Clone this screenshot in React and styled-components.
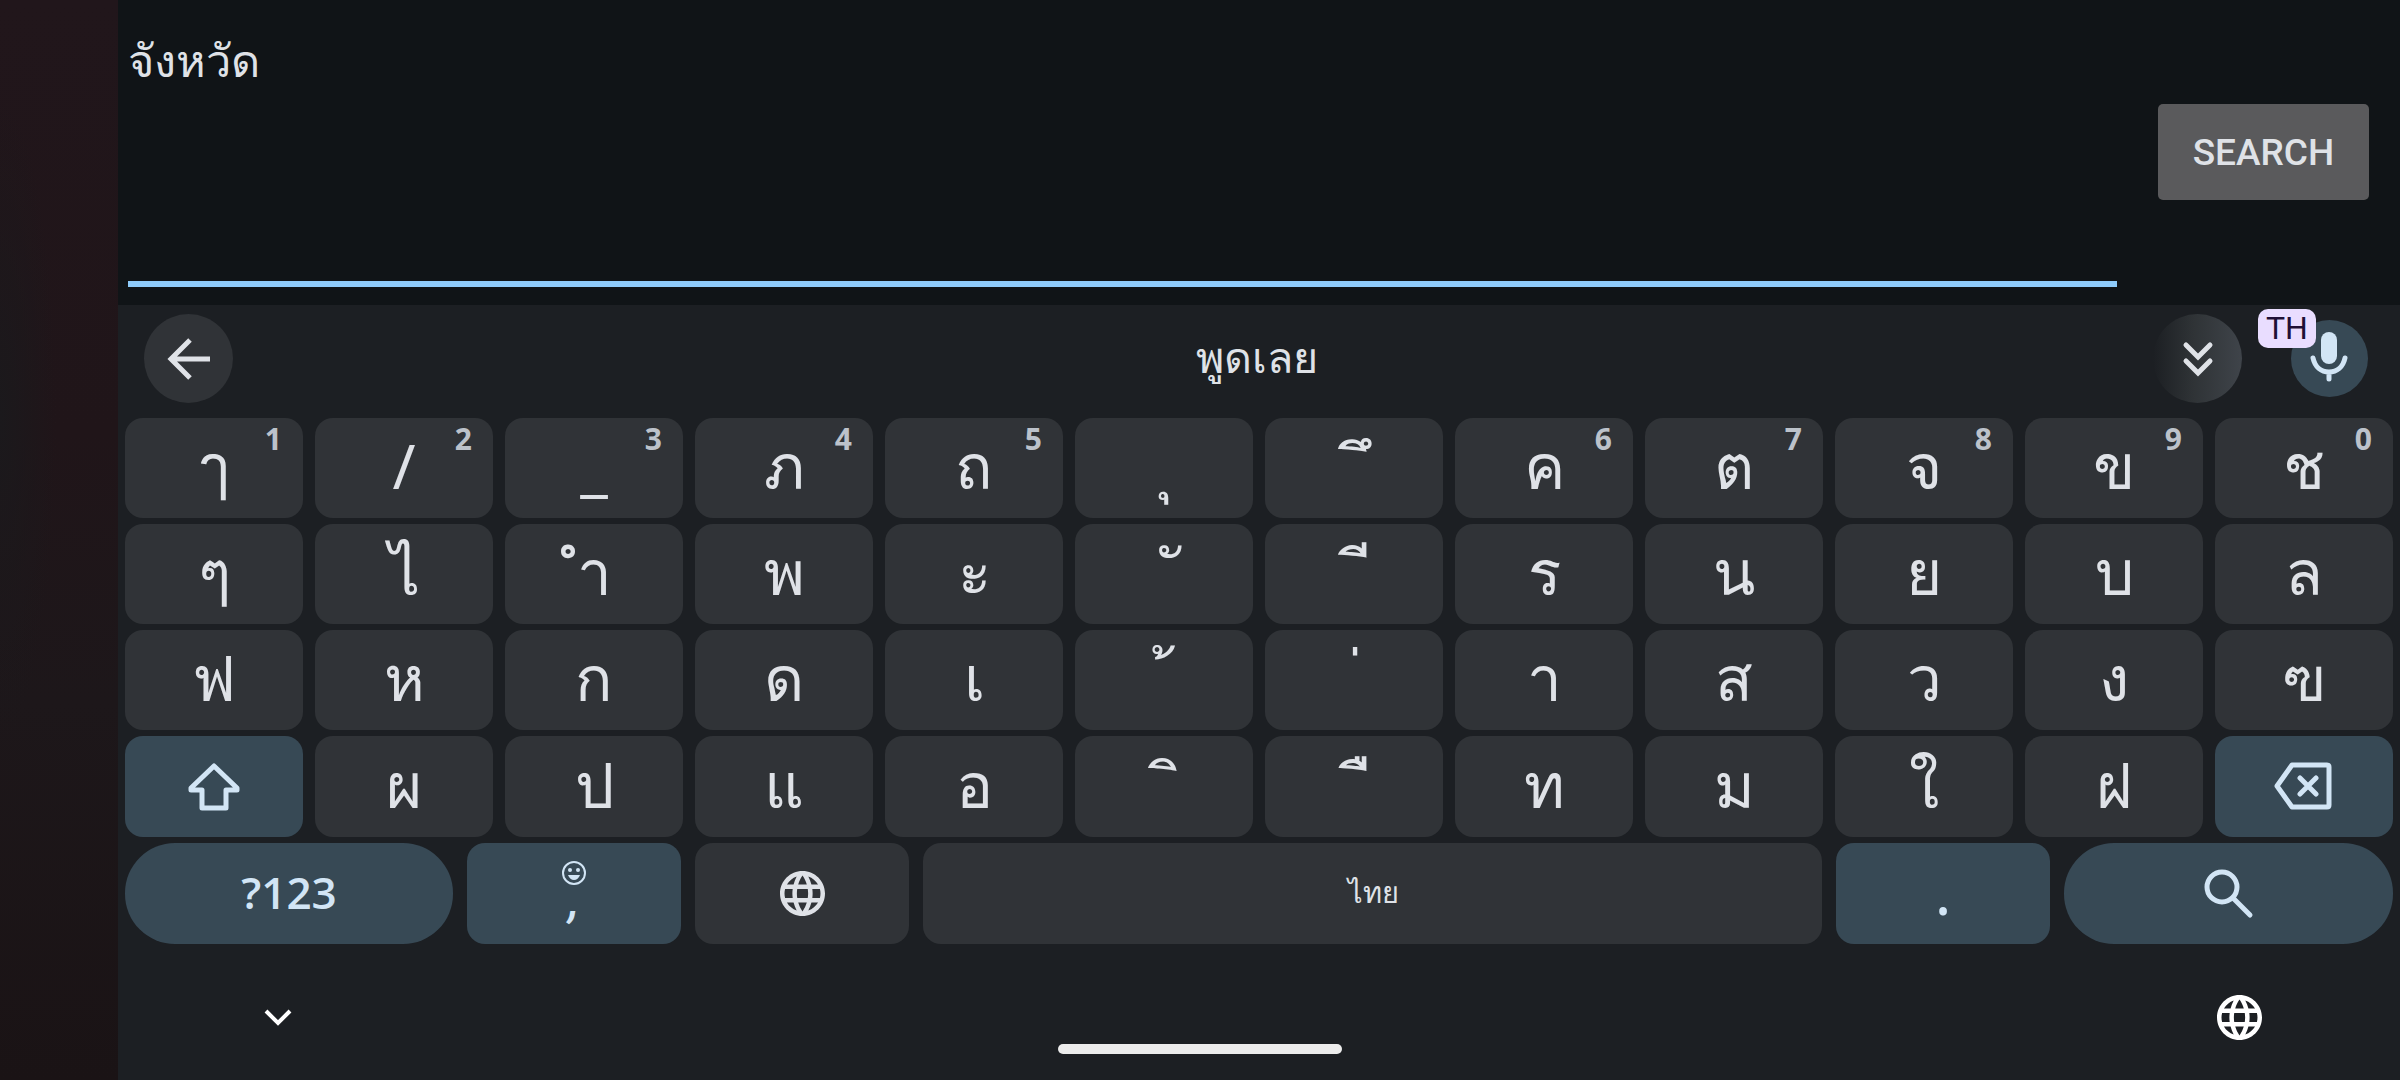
import React from 'react';
import styled, { createGlobalStyle } from 'styled-components';

const latin = `Roboto, "Noto Sans", "Liberation Sans", sans-serif`;
const digits = `"Open Sans", "Noto Sans", sans-serif`;
const thai = `"Noto Sans", "Liberation Sans", sans-serif`;

const color = {
  app: '#101417',
  board: '#1c1f23',
  key: '#303337',
  action: '#374955',
  ink: '#dfe2e7',
  accentInk: '#d2e5f5',
  line: '#8ecbfa',
};

const GlobalStyle = createGlobalStyle`
  * { box-sizing: border-box; }
  body { margin: 0; background: ${color.app}; }
  button { border: 0; padding: 0; font: inherit; color: inherit; cursor: pointer; }
  svg { display: block; }
`;

const Screen = styled.div`
  position: relative;
  display: grid;
  grid-template-columns: 118px minmax(0, 1fr);
  min-height: 100vh;
  font-family: ${latin};
  color: ${color.ink};
`;

const Wallpaper = styled.aside`
  background:
    radial-gradient(ellipse 56px 320px at 0 420px, #1b191c 0%, rgba(27, 25, 28, 0) 100%),
    linear-gradient(180deg, #21161b 0%, #201519 40%, #1d171a 65%, #1a1315 100%);
`;

const Main = styled.main`
  display: flex;
  flex-direction: column;
  background: ${color.board};
`;

const Compose = styled.form`
  display: flex;
  align-items: flex-start;
  gap: 41px;
  height: 305px;
  padding: 0 31px 18px 10px;
  background: ${color.app};
`;

const Field = styled.textarea`
  flex: 1;
  align-self: stretch;
  min-width: 0;
  padding: 30px 0 0;
  border: 0;
  border-bottom: 6px solid ${color.line};
  border-radius: 0;
  outline: 0;
  resize: none;
  background: transparent;
  color: ${color.ink};
  font: 400 45px/60px ${thai};
`;

const SearchButton = styled.button`
  width: 211px;
  height: 96px;
  margin-top: 104px;
  padding-top: 2px;
  border-radius: 5px;
  background: #5a5a5c;
  color: ${color.ink};
  font: 500 37px/44px ${latin};
`;

const Toolbar = styled.header`
  display: grid;
  grid-template-columns: 1fr auto 1fr;
  align-items: center;
  height: 107px;
  padding: 0 32px 0 26px;
`;

const Tools = styled.div`
  display: flex;
  align-items: center;
  justify-content: flex-end;
  gap: 49px;
`;

const RoundButton = styled.button`
  position: relative;
  display: grid;
  place-items: center;
  width: ${(p) => p.$size}px;
  height: ${(p) => p.$size}px;
  border-radius: 50%;
  background: ${(p) => p.$fill};
`;

const VoiceButton = styled(RoundButton)`
  color: ${color.accentInk};
`;

const Prompt = styled.p`
  margin: 0;
  padding: 0 0 4px 2px;
  font: 400 43px/60px ${thai};
`;

const Badge = styled.span`
  position: absolute;
  top: -11px;
  left: -33px;
  padding: 0 8px;
  border-radius: 10px;
  background: #e9ddff;
  color: #1f1036;
  font: 400 32px/39px ${latin};
`;

const Keys = styled.section`
  display: flex;
  flex-direction: column;
  gap: 6px;
  padding: 6px 7px 0;
`;

const KeyRow = styled.div`
  display: grid;
  grid-template-columns: ${(p) => p.$columns || 'repeat(12, minmax(0, 1fr))'};
  grid-auto-rows: ${(p) => (p.$tall ? 101 : 100)}px;
  gap: ${(p) => (p.$columns ? 14 : 12)}px;
`;

const Key = styled.button`
  position: relative;
  display: flex;
  flex-direction: column;
  align-items: center;
  justify-content: center;
  border-radius: ${(p) => (p.$pill ? 50 : 18)}px;
  background: ${(p) => (p.$action ? color.action : color.key)};
  color: ${(p) => (p.$action ? color.accentInk : color.ink)};
`;

const letterPadding = {
  base: '0 0 6px',
  vowel: '0 0 6px 18px',
  tone: '14px 0 0',
};

const Letter = styled.span`
  padding: ${(p) => letterPadding[p.$kind || 'base']};
  font: 400 62px/80px ${thai};
`;

const Hint = styled.span`
  position: absolute;
  top: 5px;
  right: 21px;
  color: #bcc2ca;
  font: 700 30px/32px ${digits};
`;

const SymbolsLabel = styled.span`
  padding-bottom: 4px;
  font: 600 44px/52px ${digits};
`;

const SpaceLabel = styled.span`
  padding: 0 0 4px 2px;
  font: 400 29px/40px ${thai};
`;

const CommaLabel = styled.span`
  margin-bottom: 12px;
  font: italic 500 48px/30px ${latin};
`;

const NavBar = styled.footer`
  display: flex;
  align-items: center;
  justify-content: space-between;
  height: 136px;
  padding: 11px 138px 0 146px;
  color: #fff;
`;

const NavButton = styled.button`
  display: grid;
  place-items: center;
  background: transparent;
`;

const HomeHandle = styled.div`
  position: absolute;
  bottom: 26px;
  left: 50%;
  width: 284px;
  height: 10px;
  margin-left: -142px;
  border-radius: 5px;
  background: #ececec;
`;

const Globe = ({ size }) => (
  <svg width={size} height={size} viewBox="2 2 20 20" fill="currentColor" aria-hidden="true">
    <path d="M11.99 2C6.47 2 2 6.48 2 12s4.47 10 9.99 10C17.52 22 22 17.52 22 12S17.52 2 11.99 2zm6.93 6h-2.95c-.32-1.25-.78-2.45-1.38-3.56 1.84.63 3.37 1.91 4.33 3.56zM12 4.04c.83 1.2 1.48 2.53 1.91 3.96h-3.82c.43-1.43 1.08-2.76 1.91-3.96zM4.26 14C4.1 13.36 4 12.69 4 12s.1-1.36.26-2h3.38c-.08.66-.14 1.32-.14 2s.06 1.34.14 2H4.26zm.82 2h2.95c.32 1.25.78 2.45 1.38 3.56-1.84-.63-3.37-1.9-4.33-3.56zm2.95-8H5.08c.96-1.66 2.49-2.93 4.33-3.56C8.81 5.55 8.35 6.75 8.03 8zM12 19.96c-.83-1.2-1.48-2.53-1.91-3.96h3.82c-.43 1.43-1.08 2.76-1.91 3.96zM14.34 14H9.66c-.09-.66-.16-1.32-.16-2s.07-1.35.16-2h4.68c.09.65.16 1.32.16 2s-.07 1.34-.16 2zm.25 5.56c.6-1.11 1.06-2.31 1.38-3.56h2.95c-.96 1.65-2.49 2.93-4.33 3.56zM16.36 14c.08-.66.14-1.32.14-2s-.06-1.34-.14-2h3.38c.16.64.26 1.31.26 2s-.1 1.36-.26 2h-3.38z" />
  </svg>
);

const BackArrow = () => (
  <svg width="44" height="44" viewBox="0 0 44 44" fill="none" stroke="currentColor" strokeWidth="5" aria-hidden="true">
    <path d="M43 22H5M23 3 4 22l19 19" />
  </svg>
);

const DoubleChevron = () => (
  <svg width="32" height="36" viewBox="0 0 32 36" fill="none" stroke="currentColor" strokeWidth="5" strokeLinecap="round" aria-hidden="true">
    <path d="M4 4l12 12L28 4M4 20l12 12 12-12" />
  </svg>
);

const Mic = () => (
  <svg width="40" height="54" viewBox="0 0 40 54" fill="none" stroke="currentColor" strokeWidth="5" strokeLinecap="round" aria-hidden="true">
    <rect x="11" y="0" width="16" height="32" rx="8" fill="currentColor" stroke="none" />
    <path d="M3 26c2 9 8 14 16 14s14-5 16-14M19 40v7" />
  </svg>
);

const ShiftArrow = () => (
  <svg width="52" height="50" viewBox="0 0 52 50" fill="none" stroke="currentColor" strokeWidth="5" strokeLinejoin="round" aria-hidden="true">
    <path d="M26 4 3 26v2h11v18h24V28h11v-2z" />
  </svg>
);

const Backspace = () => (
  <svg width="60" height="50" viewBox="0 1 60 50" fill="none" stroke="currentColor" strokeWidth="5" strokeLinecap="round" strokeLinejoin="round" aria-hidden="true">
    <path d="M18 4h35q2 0 2 2v38q0 2-2 2H18L3 25zM26 17l16 16M42 17 26 33" />
  </svg>
);

const Magnifier = () => (
  <svg width="52" height="52" viewBox="0 0 52 52" fill="none" stroke="currentColor" strokeWidth="5" strokeLinecap="round" aria-hidden="true">
    <circle cx="19" cy="19" r="15" />
    <path d="M30 30 47 47" />
  </svg>
);

const Smiley = () => (
  <svg width="24" height="24" viewBox="0 0 24 24" aria-hidden="true">
    <circle cx="12" cy="12" r="11" fill="none" stroke="currentColor" strokeWidth="2" />
    <circle cx="8" cy="9" r="2" fill="currentColor" />
    <circle cx="16" cy="9" r="2" fill="currentColor" />
    <path d="M6 14h12q-2 5-6 5t-6-5z" fill="currentColor" />
  </svg>
);

const ChevronDown = () => (
  <svg width="28" height="18" viewBox="0 0 28 18" fill="none" stroke="currentColor" strokeWidth="4" aria-hidden="true">
    <path d="M2 2l12 12L26 2" />
  </svg>
);

// A non-breaking space carries each vowel or tone mark, so no dotted circle is drawn.
const mark = (char, kind) => ({ char: '\u00a0' + char, kind });
const key = (char, hint) => ({ char, hint });

const letterRows = [
  [
    key('ๅ', '1'), key('/', '2'), key('_', '3'), key('ภ', '4'), key('ถ', '5'),
    mark('\u0e38', 'base'), mark('\u0e36', 'vowel'),
    key('ค', '6'), key('ต', '7'), key('จ', '8'), key('ข', '9'), key('ช', '0'),
  ],
  [
    key('ๆ'), key('ไ'), key('\u0e33'), key('พ'), key('ะ'),
    mark('\u0e31', 'vowel'), mark('\u0e35', 'vowel'),
    key('ร'), key('น'), key('ย'), key('บ'), key('ล'),
  ],
  [
    key('ฟ'), key('ห'), key('ก'), key('ด'), key('เ'),
    mark('\u0e49', 'tone'), mark('\u0e48', 'tone'),
    key('า'), key('ส'), key('ว'), key('ง'), key('ฃ'),
  ],
];

const bottomLetters = [
  key('ผ'), key('ป'), key('แ'), key('อ'),
  mark('\u0e34', 'vowel'), mark('\u0e37', 'vowel'),
  key('ท'), key('ม'), key('ใ'), key('ฝ'),
];

const LetterKey = ({ char, kind, hint }) => (
  <Key type="button">
    <Letter $kind={kind}>{char}</Letter>
    {hint && <Hint>{hint}</Hint>}
  </Key>
);

export default function App() {
  return (
    <Screen>
      <GlobalStyle />
      <Wallpaper />
      <Main>
        <Compose onSubmit={(e) => e.preventDefault()}>
          <Field aria-label="Search text" defaultValue="จังหวัด" spellCheck={false} />
          <SearchButton type="submit">SEARCH</SearchButton>
        </Compose>

        <Toolbar>
          <RoundButton type="button" aria-label="Back" $size={89} $fill={color.key}>
            <BackArrow />
          </RoundButton>
          <Prompt>พูดเลย</Prompt>
          <Tools>
            <RoundButton type="button" aria-label="More" $size={89}
              $fill="linear-gradient(90deg, #1c1f23 0%, #2f3336 45%, #3f444a 100%)">
              <DoubleChevron />
            </RoundButton>
            <VoiceButton type="button" aria-label="Voice input" $size={77} $fill={color.action}>
              <Mic />
              <Badge>TH</Badge>
            </VoiceButton>
          </Tools>
        </Toolbar>

        <Keys>
          {letterRows.map((row) => (
            <KeyRow key={row[0].char}>
              {row.map((k) => <LetterKey key={k.char} {...k} />)}
            </KeyRow>
          ))}
          <KeyRow $tall>
            <Key type="button" $action aria-label="Shift"><ShiftArrow /></Key>
            {bottomLetters.map((k) => <LetterKey key={k.char} {...k} />)}
            <Key type="button" $action aria-label="Delete"><Backspace /></Key>
          </KeyRow>
          <KeyRow $tall $columns="328fr 214fr 214fr 899fr 214fr 329fr">
            <Key type="button" $action $pill><SymbolsLabel>?123</SymbolsLabel></Key>
            <Key type="button" $action><Smiley /><CommaLabel>,</CommaLabel></Key>
            <Key type="button" aria-label="Language"><Globe size={45} /></Key>
            <Key type="button"><SpaceLabel>ไทย</SpaceLabel></Key>
            <Key type="button" $action><Letter>.</Letter></Key>
            <Key type="button" $action $pill aria-label="Search"><Magnifier /></Key>
          </KeyRow>
        </Keys>

        <NavBar>
          <NavButton type="button" aria-label="Hide keyboard"><ChevronDown /></NavButton>
          <NavButton type="button" aria-label="Switch keyboard"><Globe size={45} /></NavButton>
        </NavBar>
      </Main>
      <HomeHandle />
    </Screen>
  );
}
